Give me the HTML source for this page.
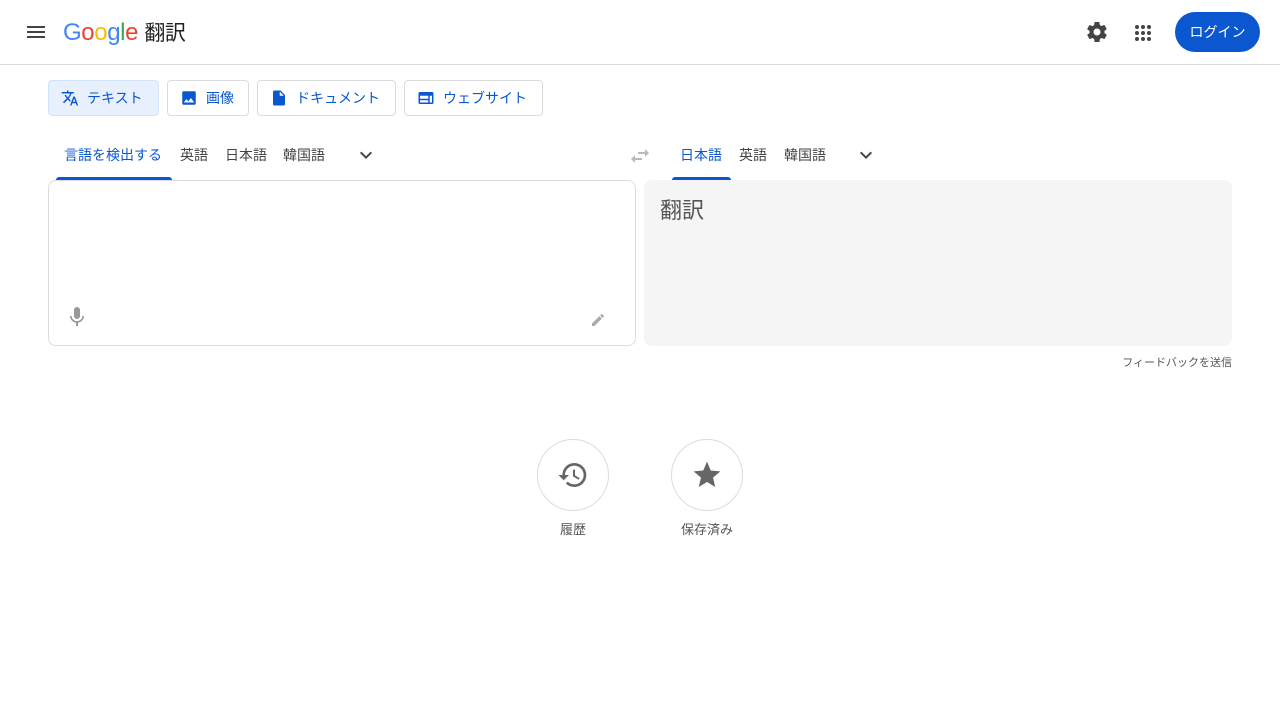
<!DOCTYPE html><html><head><meta charset="utf-8"><style>
*{box-sizing:border-box;margin:0;padding:0}
body{width:1280px;height:720px;background:#fff;font-family:"Liberation Sans","Noto Sans CJK JP",sans-serif;position:relative;overflow:hidden;color:#444}
.a{position:absolute}
.btn{position:absolute;top:80px;height:36px;border:1px solid #dadce0;border-radius:4px;display:flex;align-items:center;padding-left:12px;font-size:14px;color:#0b57d0;gap:8px}
.tab{position:absolute;top:145px;font-size:14px;color:#444}
</style></head><body>
<svg class="a" style="left:24px;top:20px" width="24" height="24" viewBox="0 0 24 24"><path d="M3 18h18v-2H3v2zm0-5h18v-2H3v2zm0-7v2h18V6H3z" fill="#444"/></svg>
<div class="a" style="left:63px;top:17px;font-size:24px;letter-spacing:-0.4px"><span style="color:#4285f4">G</span><span style="color:#ea4335">o</span><span style="color:#fbbc05">o</span><span style="color:#4285f4">g</span><span style="color:#34a853">l</span><span style="color:#ea4335">e</span> <span style="color:#202124;font-size:21px">翻訳</span></div>
<svg class="a" style="left:1085px;top:20px" width="24" height="24" viewBox="0 0 24 24"><path fill="#444" d="M19.4 13c.04-.33.06-.66.06-1s-.02-.67-.06-1l2.1-1.65c.2-.15.25-.42.12-.64l-2-3.46c-.12-.22-.39-.3-.61-.22l-2.49 1a7.3 7.3 0 0 0-1.730-1l-.38-2.65A.49.49 0 0 0 14 2h-4c-.25 0-.46.18-.49.42l-.38 2.65c-.61.25-1.170.59-1.73 1l-2.49-1c-.23-.09-.49 0-.61.22l-2 3.46c-.13.22-.07.49.12.64L4.57 11c-.04.33-.07.67-.07 1s.02.67.06 1l-2.1 1.65c-.2.15-.25.42-.12.64l2 3.46c.12.22.39.3.61.22l2.49-1c.52.4 1.08.73 1.69 1l.38 2.65c.03.24.24.42.49.42h4c.25 0 .46-.18.49-.42l.38-2.65c.61-.25 1.17-.59 1.69-1l2.49 1c.23.09.49 0 .61-.22l2-3.46c.12-.22.07-.49-.12-.64L19.4 13zM12 15.5a3.5 3.5 0 1 1 0-7 3.5 3.5 0 0 1 0 7z"/><circle cx="12" cy="12" r="2" fill="#fff"/></svg>
<svg class="a" style="left:1131px;top:21px" width="24" height="24" viewBox="0 0 24 24" fill="#444"><circle cx="6" cy="6" r="2"/><circle cx="12" cy="6" r="2"/><circle cx="18" cy="6" r="2"/><circle cx="6" cy="12" r="2"/><circle cx="12" cy="12" r="2"/><circle cx="18" cy="12" r="2"/><circle cx="6" cy="18" r="2"/><circle cx="12" cy="18" r="2"/><circle cx="18" cy="18" r="2"/></svg>
<div class="a" style="left:1175px;top:12px;width:85px;height:40px;border-radius:20px;background:#0b57d0;color:#fff;font-size:14px;display:flex;align-items:center;justify-content:center">ログイン</div>
<div class="a" style="left:0;top:64px;width:1280px;height:1px;background:#dadce0"></div>
<div class="btn" style="left:48px;width:111px;background:#e8f0fe;border-color:#d2e3fc;color:#0b57d0"><svg width="18" height="18" viewBox="0 0 24 24"><path fill="#0b57d0" d="M12.87 15.07l-2.54-2.51.03-.03A17.5 17.5 0 0 0 14.07 6H17V4h-7V2H8v2H1v2h11.17C11.5 7.92 10.44 9.75 9 11.35 8.07 10.32 7.3 9.19 6.69 8h-2c.73 1.63 1.73 3.17 2.98 4.56l-5.09 5.02L4 19l5-5 3.11 3.11.76-2.04zM18.5 10h-2L12 22h2l1.12-3h4.75L21 22h2l-4.5-12zm-2.62 7l1.62-4.33L19.12 17h-3.24z"/></svg>テキスト</div>
<div class="btn" style="left:167px;width:82px"><svg width="18" height="18" viewBox="0 0 24 24"><path fill="#0b57d0" d="M21 19V5a2 2 0 0 0-2-2H5a2 2 0 0 0-2 2v14a2 2 0 0 0 2 2h14a2 2 0 0 0 2-2zM8.5 13.5l2.5 3 3.5-4.5 4.5 6H5l3.5-4.5z"/></svg>画像</div>
<div class="btn" style="left:257px;width:139px"><svg width="18" height="18" viewBox="0 0 24 24"><path fill="#0b57d0" d="M14 2H6a2 2 0 0 0-2 2v16a2 2 0 0 0 2 2h12a2 2 0 0 0 2-2V8l-6-6zm-1 7V3.5L18.5 9H13z"/></svg>ドキュメント</div>
<div class="btn" style="left:404px;width:139px"><svg width="18" height="18" viewBox="0 0 24 24"><path fill="#0b57d0" d="M20 4H4a2 2 0 0 0-2 2v12a2 2 0 0 0 2 2h16a2 2 0 0 0 2-2V6a2 2 0 0 0-2-2zM4 9h11v4H4zm0 6h11v3H4zm16 3h-3V9h3z"/></svg>ウェブサイト</div>
<div class="tab" style="left:64px;color:#0b57d0">言語を検出する</div>
<div class="a" style="left:56px;top:177px;width:116px;height:3px;background:#0b57d0;border-radius:3px 3px 0 0"></div>
<div class="tab" style="left:180px">英語</div><div class="tab" style="left:225px">日本語</div><div class="tab" style="left:283px">韓国語</div>
<svg class="a" style="left:354px;top:143px" width="24" height="24" viewBox="0 0 24 24"><path d="M7.4 8.6 12 13.2l4.6-4.6L18 10l-6 6-6-6z" fill="#444"/></svg>
<svg class="a" style="left:628px;top:144px" width="24" height="24" viewBox="0 0 24 24"><path d="M6.99 11 3 15l3.99 4v-3H14v-2H6.99v-3zM21 9l-3.99-4v3H10v2h7.01v3L21 9z" fill="#bbb"/></svg>
<div class="tab" style="left:680px;color:#0b57d0">日本語</div>
<div class="a" style="left:672px;top:177px;width:59px;height:3px;background:#0b57d0;border-radius:3px 3px 0 0"></div>
<div class="tab" style="left:739px">英語</div><div class="tab" style="left:784px">韓国語</div>
<svg class="a" style="left:854px;top:143px" width="24" height="24" viewBox="0 0 24 24"><path d="M7.4 8.6 12 13.2l4.6-4.6L18 10l-6 6-6-6z" fill="#444"/></svg>
<div class="a" style="left:48px;top:180px;width:588px;height:166px;border:1px solid #dadce0;border-radius:8px"></div>
<svg class="a" style="left:65px;top:305px" width="24" height="24" viewBox="0 0 24 24"><path fill="#999" d="M12 14a3 3 0 0 0 3-3V5a3 3 0 0 0-6 0v6a3 3 0 0 0 3 3zm5.3-3c0 3-2.54 5.1-5.3 5.1S6.7 14 6.7 11H5c0 3.41 2.72 6.23 6 6.72V21h2v-3.28c3.28-.48 6-3.3 6-6.72h-1.7z"/></svg>
<svg class="a" style="left:590px;top:312px" width="16" height="16" viewBox="0 0 24 24"><path fill="#aaa" d="M3 17.25V21h3.75L17.81 9.94l-3.750-3.75L3 17.25zM20.71 7.04a1 1 0 0 0 0-1.41l-2.34-2.34a1 1 0 0 0-1.41 0l-1.83 1.83 3.75 3.75 1.83-1.83z"/></svg>
<div class="a" style="left:644px;top:180px;width:588px;height:166px;background:#f5f5f5;border-radius:8px"></div>
<div class="a" style="left:660px;top:193px;font-size:22px;color:#555">翻訳</div>
<div class="a" style="left:1100px;top:354px;width:132px;text-align:right;font-size:11px;color:#555">フィードバックを送信</div>
<div class="a" style="left:537px;top:439px;width:72px;height:72px;border:1px solid #dadce0;border-radius:50%"></div>
<svg class="a" style="left:557px;top:459px" width="32" height="32" viewBox="0 0 24 24"><path fill="#666" d="M13 3a9 9 0 0 0-9 9H1l3.89 3.89.07.14L9 12H6c0-3.87 3.13-7 7-7s7 3.13 7 7-3.13 7-7 7c-1.930 0-3.68-.79-4.94-2.06l-1.42 1.42A8.95 8.95 0 0 0 13 21a9 9 0 0 0 0-18zm-1 5v5l4.28 2.54.72-1.21-3.5-2.08V8H12z"/></svg>
<div class="a" style="left:537px;top:519px;width:72px;text-align:center;font-size:13px;color:#555">履歴</div>
<div class="a" style="left:671px;top:439px;width:72px;height:72px;border:1px solid #dadce0;border-radius:50%"></div>
<svg class="a" style="left:691px;top:459px" width="32" height="32" viewBox="0 0 24 24"><path fill="#666" d="M12 17.27 18.18 21l-1.64-7.03L22 9.24l-7.19-.61L12 2 9.19 8.63 2 9.24l5.46 4.73L5.820 21z"/></svg>
<div class="a" style="left:667px;top:519px;width:80px;text-align:center;font-size:13px;color:#555">保存済み</div>
</body></html>
